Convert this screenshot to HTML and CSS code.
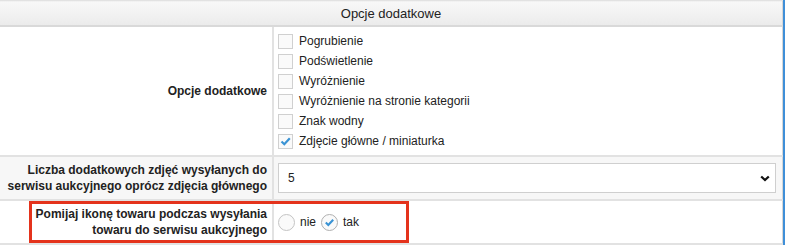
FILE: index.html
```html
<!DOCTYPE html>
<html lang="pl">
<head>
    <meta charset="UTF-8">
    <title>Opcje dodatkowe</title>
    <link rel="stylesheet" href="styles.css">
</head>
<body>
    <div class="panel">
        <table class="options">
            <thead>
                <tr>
                    <th colspan="2">Opcje dodatkowe</th>
                </tr>
            </thead>
            <tbody>
                <tr>
                    <td class="label">Opcje dodatkowe</td>
                    <td class="field checks">
                        <div class="check"><span class="box"></span>Pogrubienie</div>
                        <div class="check"><span class="box"></span>Podświetlenie</div>
                        <div class="check"><span class="box"></span>Wyróżnienie</div>
                        <div class="check"><span class="box"></span>Wyróżnienie na stronie kategorii</div>
                        <div class="check"><span class="box"></span>Znak wodny</div>
                        <div class="check"><span class="box">
                            <svg width="13" height="13" viewBox="0 0 13 13"><path d="M2.5 6.5 L5.3 9.2 L10.8 3.2" fill="none" stroke="#3a93d4" stroke-width="2.2"/></svg>
                        </span>Zdjęcie główne / miniaturka</div>
                    </td>
                </tr>
                <tr class="alt">
                    <td class="label">Liczba dodatkowych zdjęć wysyłanych do<br>serwisu aukcyjnego oprócz zdjęcia głównego</td>
                    <td class="field">
                        <div class="select">
                            <span>5</span>
                            <svg width="10" height="7" viewBox="0 0 10 7"><path d="M1.2 1.5 L5 5 L8.8 1.5" fill="none" stroke="#111" stroke-width="2.3"/></svg>
                        </div>
                    </td>
                </tr>
                <tr>
                    <td class="label">Pomijaj ikonę towaru podczas wysyłania<br>towaru do serwisu aukcyjnego</td>
                    <td class="field">
                        <div class="radios">
                            <span class="radio"></span>nie
                            <span class="radio on">
                                <svg width="11" height="11" viewBox="0 0 11 11"><path d="M1.8 5.6 L4.3 8 L9.2 2.8" fill="none" stroke="#3a93d4" stroke-width="2.1"/></svg>
                            </span>tak
                        </div>
                    </td>
                </tr>
            </tbody>
        </table>
        <div class="highlight"></div>
    </div>
</body>
</html>
```

FILE: styles.css
```css
body {
    margin: 0;
    font-family: "Liberation Sans", Arial, sans-serif;
    font-size: 12px;
    color: #222;
    background: #fff;
}

.panel {
    position: relative;
    width: 783px;
    border-right: 2px solid #3f8fd8;
}

.options {
    width: 100%;
    border-collapse: collapse;
    border-right: 1px solid #d6d6d6;
}

.options th {
    height: 24px;
    padding: 0;
    font-size: 13px;
    font-weight: normal;
    color: #222;
    background: linear-gradient(#f8f8f8, #ebebeb);
    border-top: 1px solid #e2e2e2;
    border-bottom: 2px solid #d9d9d9;
}

.options td {
    border-bottom: 2px solid #e2e2e2;
    vertical-align: middle;
}

.options .label {
    width: 267px;
    padding: 5px 5px 5px 0;
    text-align: right;
    font-weight: bold;
    line-height: 16px;
    border-right: 2px solid #e2e2e2;
}

.options .field {
    padding: 6px 6px 6px 4px;
}

.options .checks {
    padding-top: 4px;
    padding-bottom: 4px;
}

.alt td {
    background: #f7f7f7;
}

.check {
    display: flex;
    align-items: center;
    height: 20px;
}

.box {
    display: flex;
    align-items: center;
    justify-content: center;
    width: 13px;
    height: 13px;
    margin-right: 6px;
    border: 1px solid #d0d0d0;
    background: #fafafa;
}

.select {
    display: flex;
    align-items: center;
    justify-content: space-between;
    height: 28px;
    padding: 0 5px 0 9px;
    background: #fff;
    border: 1px solid #cfcfcf;
}

.radios {
    display: flex;
    align-items: center;
    height: 30px;
}

.radio {
    display: flex;
    align-items: center;
    justify-content: center;
    width: 15px;
    height: 15px;
    margin-right: 5px;
    border: 1px solid #c4c4c4;
    border-radius: 50%;
    background: #fafafa;
}

.radio.on {
    margin-left: 5px;
    border-color: #b0b0b0;
}

.highlight {
    position: absolute;
    left: 29px;
    top: 201px;
    width: 374px;
    height: 36px;
    border: 3px solid #e4331c;
}
```
